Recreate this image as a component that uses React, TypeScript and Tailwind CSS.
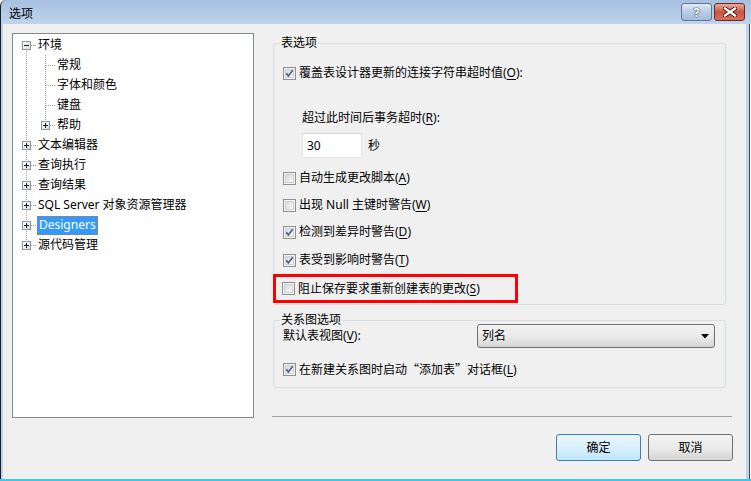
import React from "react";

function Check({ checked }: { checked?: boolean }) {
  return (
    <svg width="13" height="13" viewBox="0 0 13 13" className="shrink-0">
      <defs>
        <linearGradient id="cbg" x1="0" y1="0" x2="1" y2="1">
          <stop offset="0" stopColor="#d6d6d6" />
          <stop offset="1" stopColor="#fbfbfb" />
        </linearGradient>
      </defs>
      <rect x="0.5" y="0.5" width="12" height="12" fill="#f6f6f6" stroke="#8e8f8f" />
      <rect x="2.5" y="2.5" width="8" height="8" fill="url(#cbg)" stroke="#cfcfcf" />
      {checked && (
        <path d="M3.3 6.4 L5.4 8.9 L9.7 3.2" fill="none" stroke="#4a5f8e" strokeWidth="1.7" />
      )}
    </svg>
  );
}

type Kind = "v" | "t" | "l" | "first";

function TreeCell({ kind, box }: { kind: Kind; box?: "plus" | "minus" }) {
  const dot = { stroke: "#a0a0a0", strokeDasharray: "1 1", strokeWidth: 1 } as const;
  return (
    <svg width="19" height="20" className="shrink-0" shapeRendering="crispEdges">
      <defs>
        <linearGradient id="tbx" x1="0" y1="0" x2="1" y2="1">
          <stop offset="0" stopColor="#ffffff" />
          <stop offset="1" stopColor="#d8d8d8" />
        </linearGradient>
      </defs>
      {(kind === "v" || kind === "t") && <line x1="9.5" y1="0" x2="9.5" y2="20" {...dot} />}
      {kind === "l" && <line x1="9.5" y1="0" x2="9.5" y2="10" {...dot} />}
      {kind === "first" && <line x1="9.5" y1="10" x2="9.5" y2="20" {...dot} />}
      {kind !== "v" && <line x1="10" y1="10.5" x2="19" y2="10.5" {...dot} />}
      {box && (
        <g>
          <rect x="5.5" y="6.5" width="8" height="8" fill="url(#tbx)" stroke="#8c97a6" />
          <line x1="7" y1="10.5" x2="12" y2="10.5" stroke="#1e1e1e" />
          {box === "plus" && <line x1="9.5" y1="8" x2="9.5" y2="13" stroke="#1e1e1e" />}
        </g>
      )}
    </svg>
  );
}

function Row({ children }: { children: React.ReactNode }) {
  return <div className="flex h-[20px] items-center">{children}</div>;
}

function U({ c }: { c: string }) {
  return <span className="underline underline-offset-[2px]">{c}</span>;
}

function CheckRow({ checked, children, className = "" }: { checked?: boolean; children: React.ReactNode; className?: string }) {
  return (
    <div className={"flex h-[20px] items-center gap-[3px] " + className}>
      <Check checked={checked} />
      <span className="whitespace-nowrap">{children}</span>
    </div>
  );
}

export default function App() {
  return (
    <div className="flex h-[481px] w-[751px] flex-col bg-white font-['Noto_Sans','Noto_Sans_CJK_SC',sans-serif] text-[12px] leading-[16px] text-black">
      {/* title bar */}
      <div className="flex h-[24px] items-start rounded-tl-[6px] border-l border-[#1c1c1c] bg-gradient-to-b from-[#a6c0df] to-[#bfd5ed]">
        <div className="mt-[6px] pl-[8px] text-[12px] leading-[16px]">选项</div>
        <div className="ml-auto mr-[6px] mt-[3px] flex gap-[2px]">
          <div className="flex h-[18px] w-[31px] items-center justify-center rounded-[3px] border border-[#5f7594] bg-gradient-to-b from-[#dfeaf6] via-[#b7cce6] to-[#a3bddc]">
            <span className="text-[13px] font-bold leading-none text-white [text-shadow:0_0_1px_#2c3a4e,0_0_1px_#2c3a4e,0_0_1px_#2c3a4e]">?</span>
          </div>
          <div className="flex h-[18px] w-[31px] items-center justify-center rounded-[3px] border border-[#6b2920] bg-gradient-to-b from-[#e9ab9c] via-[#c9553f] to-[#d4725e]">
            <svg width="14" height="10" viewBox="0 0 14 10">
              <path d="M2 1.5 L12 8.5 M12 1.5 L2 8.5" stroke="#4a1a14" strokeWidth="4" strokeLinecap="square" />
              <path d="M2 1.5 L12 8.5 M12 1.5 L2 8.5" stroke="#ffffff" strokeWidth="2.2" strokeLinecap="square" />
            </svg>
          </div>
        </div>
      </div>

      {/* body */}
      <div className="flex flex-1">
        <div className="w-[3px] border-l border-[#1c1c1c] bg-[#bcd4ee]" />
        <div className="flex flex-1 flex-col bg-[#f0f0f0]">
          <div className="mt-[9px] flex">
            {/* tree */}
            <div className="ml-[9px] h-[385px] w-[242px] border border-[#828790] bg-white pl-[4px] pt-[1px]">
              <Row>
                <TreeCell kind="first" box="minus" />
                <span className="ml-[2px]">环境</span>
              </Row>
              {["常规", "字体和颜色", "键盘"].map((t) => (
                <Row key={t}>
                  <TreeCell kind="v" />
                  <TreeCell kind="t" />
                  <span className="ml-[2px]">{t}</span>
                </Row>
              ))}
              <Row>
                <TreeCell kind="v" />
                <TreeCell kind="l" box="plus" />
                <span className="ml-[2px]">帮助</span>
              </Row>
              {["文本编辑器", "查询执行", "查询结果", "SQL Server 对象资源管理器"].map((t) => (
                <Row key={t}>
                  <TreeCell kind="t" box="plus" />
                  <span className="ml-[2px] whitespace-nowrap">{t}</span>
                </Row>
              ))}
              <Row>
                <TreeCell kind="t" box="plus" />
                <span className="ml-[1px] flex h-[19px] items-center border border-dotted border-[#c07a30] bg-[#3399ff] px-[1px] text-white">
                  Designers
                </span>
              </Row>
              <Row>
                <TreeCell kind="l" box="plus" />
                <span className="ml-[2px]">源代码管理</span>
              </Row>
            </div>

            {/* right column */}
            <div className="ml-[18px] flex h-[385px] w-[460px] flex-col">
              <fieldset className="ml-px mt-[2px] w-[453px] rounded-[3px] border border-[#d5dfe5] p-0">
                <legend className="ml-[6px] px-[1px] leading-[16px]">表选项</legend>
                <div className="pb-[1px] pl-[9px] pt-[12px]">
                  <CheckRow checked>
                    覆盖表设计器更新的连接字符串超时值(<U c="O" />):
                  </CheckRow>
                  <div className="ml-[19px] mt-[25px] flex h-[20px] items-center">
                    超过此时间后事务超时(<U c="R" />):
                  </div>
                  <div className="ml-[19px] mt-[5px] flex items-center gap-[6px]">
                    <div className="flex h-[25px] w-[60px] items-center border border-[#e2e6eb] border-t-[#d3d6dc] bg-white pl-[4px]">
                      30
                    </div>
                    <span>秒</span>
                  </div>
                  <CheckRow className="mt-[10px]">
                    自动生成更改脚本(<U c="A" />)
                  </CheckRow>
                  <CheckRow className="mt-[7px]">
                    出现 Null 主键时警告(<U c="W" />)
                  </CheckRow>
                  <CheckRow checked className="mt-[7px]">
                    检测到差异时警告(<U c="D" />)
                  </CheckRow>
                  <CheckRow checked className="mt-[8px]">
                    表受到影响时警告(<U c="T" />)
                  </CheckRow>
                  <div className="-ml-[10px] mt-[4px] flex h-[29px] w-[245px] items-center gap-[3px] border-[3px] border-[#ff0000] pl-[6px]">
                    <Check />
                    <span className="whitespace-nowrap">
                      阻止保存要求重新创建表的更改(<U c="S" />)
                    </span>
                  </div>
                </div>
              </fieldset>

              <fieldset className="ml-px mt-[7px] w-[453px] rounded-[3px] border border-[#d5dfe5] p-0">
                <legend className="ml-[6px] px-[1px] leading-[16px]">关系图选项</legend>
                <div className="-mt-[4px] pb-[8px] pl-[9px] pr-[10px]">
                  <div className="flex h-[24px] items-center">
                    <span>
                      默认表视图(<U c="V" />):
                    </span>
                    <div className="ml-auto flex h-[24px] w-[238px] items-center rounded-[3px] border border-[#707070] bg-gradient-to-b from-[#f2f2f2] via-[#ebebeb] to-[#d6d6d6] pl-[4px] pr-[4px]">
                      <span>列名</span>
                      <svg width="8" height="5" viewBox="0 0 8 5" className="ml-auto mr-[1px]">
                        <path d="M0 0 H8 L4 4.5 Z" fill="#000" />
                      </svg>
                    </div>
                  </div>
                  <CheckRow checked className="mt-[11px]">
                    在新建关系图时启动<span className="font-['Noto_Sans_CJK_SC',sans-serif]">“</span>添加表<span className="font-['Noto_Sans_CJK_SC',sans-serif]">”</span>对话框(<U c="L" />)
                  </CheckRow>
                </div>
              </fieldset>

              <div className="flex-1" />
              <div className="mb-[1px] h-px w-[460px] bg-[#a0a0a0]" />
            </div>
          </div>

          {/* buttons */}
          <div className="mt-[16px] flex justify-end gap-[7px] pr-[13px]">
            <button className="flex h-[27px] w-[85px] items-center justify-center rounded-[3px] border border-[#3c7fb1] bg-gradient-to-b from-[#eaf6fd] via-[#d9f0fc] to-[#bee6fd] text-[12px]">
              确定
            </button>
            <button className="flex h-[27px] w-[85px] items-center justify-center rounded-[3px] border border-[#707070] bg-gradient-to-b from-[#f2f2f2] via-[#ebebeb] to-[#d4d4d4] text-[12px]">
              取消
            </button>
          </div>
        </div>
        <div className="flex w-[5px]">
          <div className="w-[3px] bg-[#bcd4ee]" />
          <div className="w-px bg-[#3a4a5e]" />
          <div className="w-px bg-white" />
        </div>
      </div>
      <div className="h-[2px] bg-[#39c8ee]" />
    </div>
  );
}
